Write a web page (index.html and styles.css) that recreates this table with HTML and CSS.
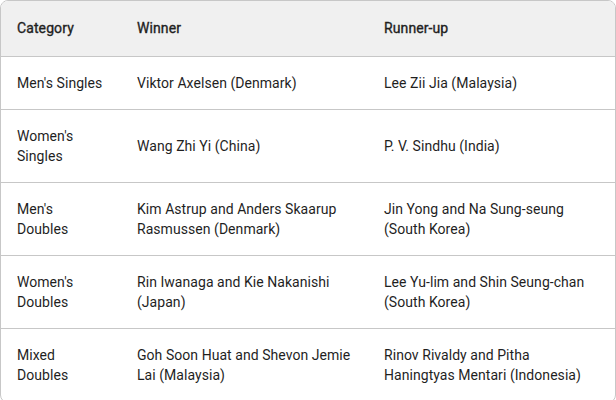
FILE: index.html
```html
<!DOCTYPE html>
<html>
<head>
<meta charset="utf-8">
<link rel="stylesheet" href="styles.css">
</head>
<body>
<div class="table-wrap">
  <table class="results">
    <colgroup>
      <col class="c1"><col class="c2"><col class="c3">
    </colgroup>
    <thead>
      <tr><th>Category</th><th>Winner</th><th>Runner-up</th></tr>
    </thead>
    <tbody>
      <tr><td>Men's Singles</td><td>Viktor Axelsen (Denmark)</td><td>Lee Zii Jia (Malaysia)</td></tr>
      <tr><td>Women's Singles</td><td>Wang Zhi Yi (China)</td><td>P. V. Sindhu (India)</td></tr>
      <tr><td>Men's Doubles</td><td>Kim Astrup and Anders Skaarup Rasmussen (Denmark)</td><td>Jin Yong and Na Sung-seung (South Korea)</td></tr>
      <tr><td>Women's Doubles</td><td>Rin Iwanaga and Kie Nakanishi (Japan)</td><td>Lee Yu-lim and Shin Seung-chan (South Korea)</td></tr>
      <tr><td>Mixed Doubles</td><td>Goh Soon Huat and Shevon Jemie Lai (Malaysia)</td><td>Rinov Rivaldy and Pitha Haningtyas Mentari (Indonesia)</td></tr>
    </tbody>
  </table>
</div>
</body>
</html>
```
FILE: styles.css
```css
html, body {
  margin: 0;
  padding: 0;
  background: #ffffff;
}
body {
  font-family: Roboto, "Liberation Sans", sans-serif;
  font-size: 14px;
  line-height: 20px;
  color: #1f1f1f;
}
.table-wrap {
  width: 616px;
  box-sizing: border-box;
  border: 1px solid #c7c7c7;
  border-radius: 8px;
  overflow: hidden;
}
.results {
  width: 614px;
  border-collapse: separate;
  border-spacing: 0;
  table-layout: fixed;
}
.c1 { width: 120px; }
.c2 { width: 247px; }
.c3 { width: 247px; }
.results th {
  background: #f0f0f0;
  font-weight: 400;
  -webkit-text-stroke: 0.35px #1f1f1f;
  letter-spacing: 0.1px;
  text-align: left;
  padding: 17px 16px 18px;
  border-bottom: 1px solid #c7c7c7;
}
.results td {
  padding: 16px;
  letter-spacing: 0.05px;
  vertical-align: middle;
  border-bottom: 1px solid #c7c7c7;
}
```
